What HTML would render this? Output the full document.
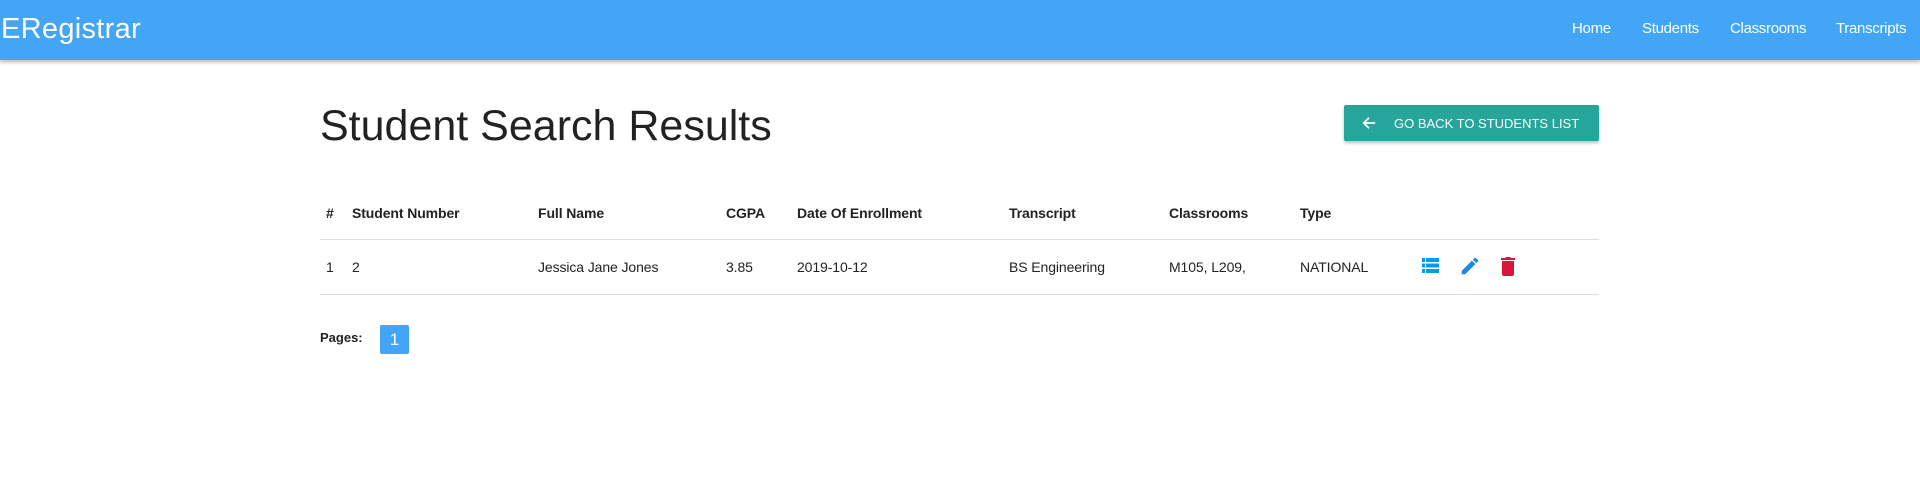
<!DOCTYPE html>
<html><head><meta charset="utf-8"><style>
*{margin:0;padding:0;box-sizing:border-box}
body{width:1920px;height:495px;background:#fff;font-family:"Liberation Sans",sans-serif;color:#222;position:relative;overflow:hidden}
.nav{position:absolute;left:0;top:0;width:1920px;height:60px;background:#42a5f5;box-shadow:0 2px 4px rgba(0,0,0,.3)}
.brand{position:absolute;left:1px;top:13px;font-size:29px;color:#fff;letter-spacing:0.3px}
.nl{position:absolute;top:20px;font-size:15px;color:#fff;letter-spacing:-0.3px}
.t{position:absolute;white-space:nowrap}
h1{position:absolute;left:320px;top:102px;font-size:43px;font-weight:300;color:#222;letter-spacing:0}
.btn{position:absolute;left:1344px;top:105px;width:255px;height:36px;background:#26a69a;border-radius:2px;box-shadow:0 2px 3px rgba(0,0,0,.25);color:#fff;font-size:13px}
.th{font-weight:bold;font-size:14px;top:205px;color:#222;letter-spacing:-0.1px}
.td{font-size:14px;top:259px;color:#222;letter-spacing:-0.1px}
.line{position:absolute;left:320px;width:1279px;height:1px;background:#ddd}
</style></head><body>
<div class="nav">
<div class="brand">ERegistrar</div>
<div class="nl" style="left:1572px">Home</div>
<div class="nl" style="left:1642px">Students</div>
<div class="nl" style="left:1730px">Classrooms</div>
<div class="nl" style="left:1836px">Transcripts</div>
</div>
<h1>Student Search Results</h1>
<div class="btn">
<svg style="position:absolute;left:18px;top:11px" width="14" height="14" viewBox="0 0 16 16"><path d="M15 8H2M8 2L2 8l6 6" stroke="#fff" stroke-width="2" fill="none"/></svg>
<span class="t" style="left:50px;top:11px">GO BACK TO STUDENTS LIST</span>
</div>
<span class="t th" style="left:326px">#</span>
<span class="t th" style="left:352px">Student Number</span>
<span class="t th" style="left:538px">Full Name</span>
<span class="t th" style="left:726px">CGPA</span>
<span class="t th" style="left:797px">Date Of Enrollment</span>
<span class="t th" style="left:1009px">Transcript</span>
<span class="t th" style="left:1169px">Classrooms</span>
<span class="t th" style="left:1300px">Type</span>
<div class="line" style="top:239px"></div>
<span class="t td" style="left:326px">1</span>
<span class="t td" style="left:352px">2</span>
<span class="t td" style="left:538px">Jessica Jane Jones</span>
<span class="t td" style="left:726px">3.85</span>
<span class="t td" style="left:797px">2019-10-12</span>
<span class="t td" style="left:1009px">BS Engineering</span>
<span class="t td" style="left:1169px">M105, L209,</span>
<span class="t td" style="left:1300px">NATIONAL</span>
<svg style="position:absolute;left:1422px;top:258px" width="17" height="15" viewBox="0 0 17 15"><g fill="#039be5"><rect x="0" y="0" width="3" height="4"/><rect x="4" y="0" width="13" height="4"/><rect x="0" y="5.5" width="3" height="4"/><rect x="4" y="5.5" width="13" height="4"/><rect x="0" y="11" width="3" height="4"/><rect x="4" y="11" width="13" height="4"/></g></svg>
<svg style="position:absolute;left:1459px;top:255px" width="22" height="22" viewBox="0 0 24 24"><path fill="#1e88e5" d="M3 17.25V21h3.75L17.81 9.94l-3.75-3.75L3 17.25zM20.71 7.04a1 1 0 000-1.41l-2.34-2.34a1 1 0 00-1.41 0l-1.830 1.83 3.75 3.75 1.83-1.83z"/></svg>
<svg style="position:absolute;left:1500px;top:256px" width="16" height="20" viewBox="0 0 16 20"><path fill="#dc143c" d="M1 2h4l1-1h4l1 1h4v2H1zM2 5h12v13a2 2 0 01-2 2H4a2 2 0 01-2-2z"/></svg>
<div class="line" style="top:294px"></div>
<span class="t" style="left:320px;top:330px;font-size:13px;font-weight:bold">Pages:</span>
<div style="position:absolute;left:380px;top:325px;width:29px;height:29px;background:#42a5f5;border-radius:2px;color:#fff;font-size:17px;text-align:center;line-height:29px">1</div>
</body></html>
